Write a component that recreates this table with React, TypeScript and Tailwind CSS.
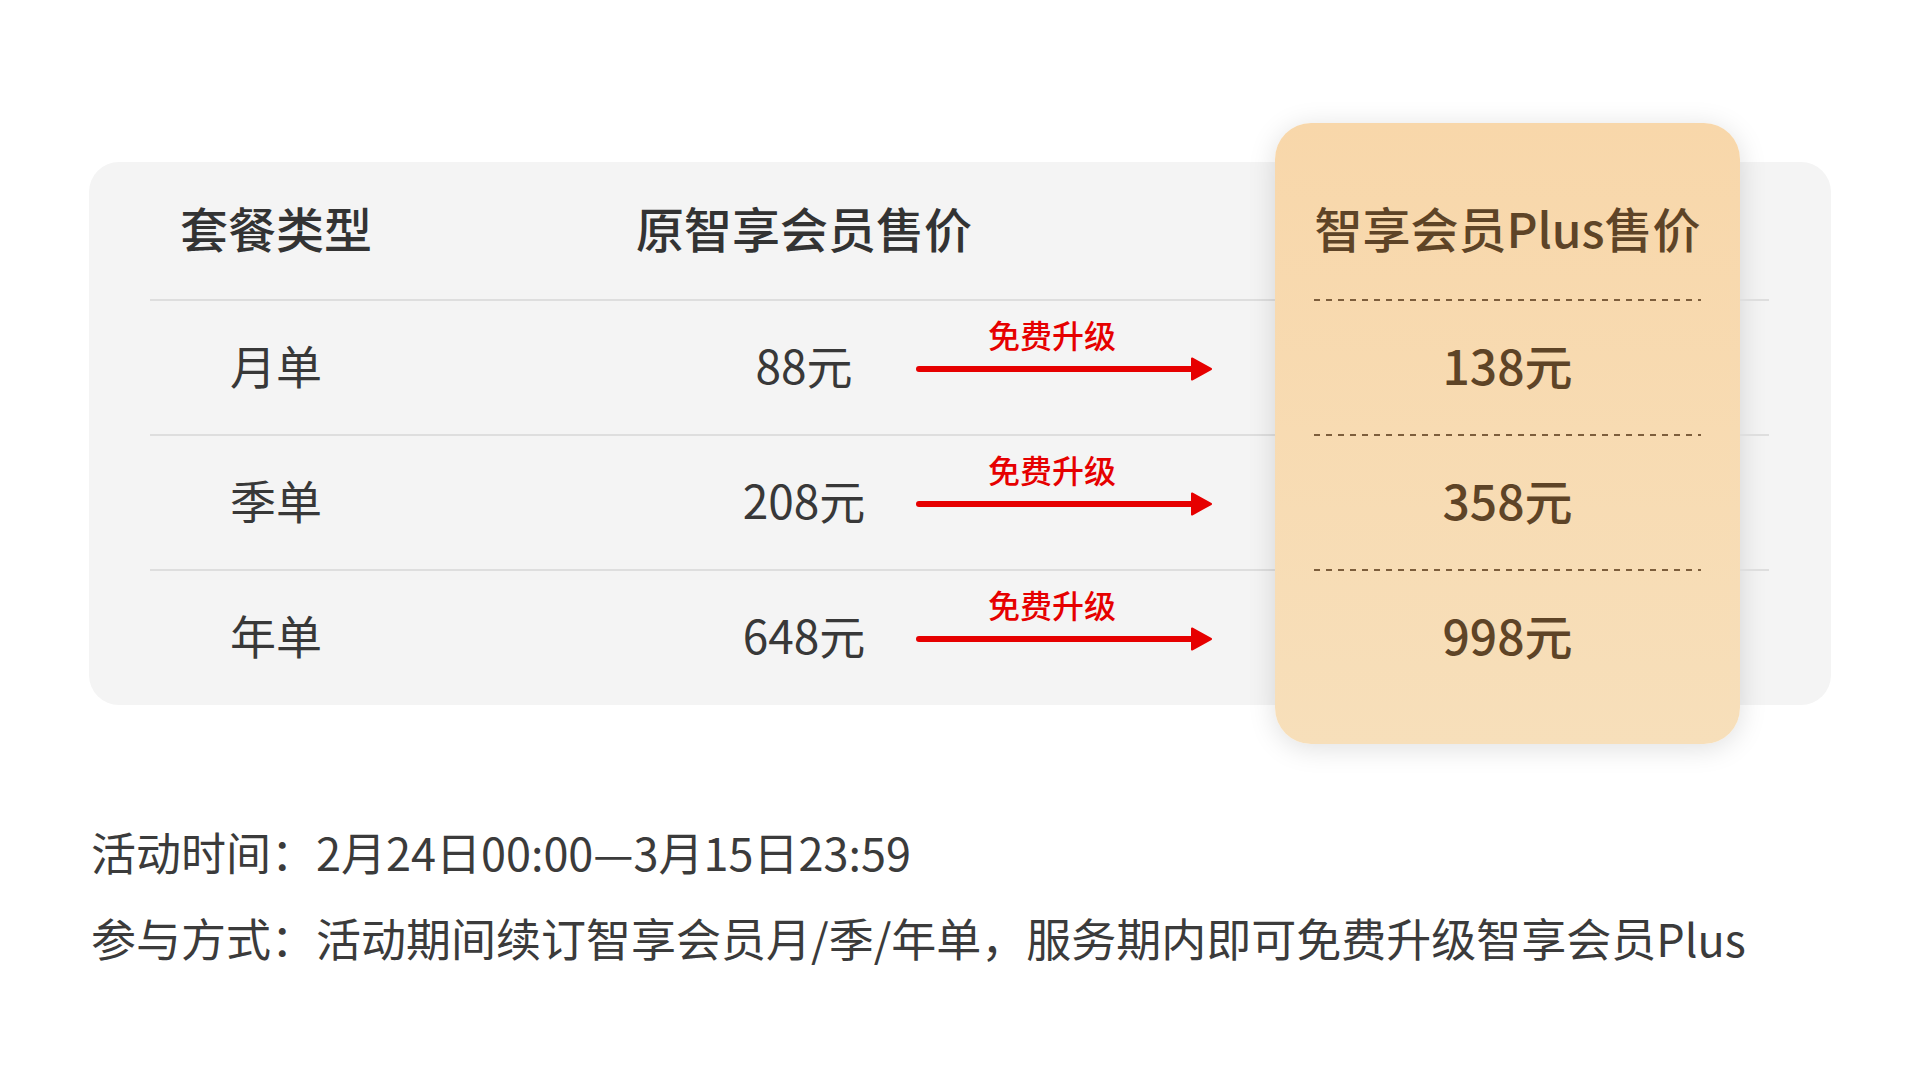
const rows = [
  { name: '月单', price: '88元', plus: '138元' },
  { name: '季单', price: '208元', plus: '358元' },
  { name: '年单', price: '648元', plus: '998元' },
];

function UpgradeArrow() {
  return (
    <div className="self-start mt-[17px] ml-[12px] w-[296px] flex flex-col">
      <span className="ml-[72px] text-[32px] leading-none font-medium text-[#e60000] whitespace-nowrap">
        免费升级
      </span>
      <svg className="mt-[7px]" width="296" height="24" viewBox="0 0 296 24">
        <path d="M3 12 H282" stroke="#e60000" strokeWidth="6" strokeLinecap="round" />
        <polygon
          points="276,1.5 295,12 276,22.5"
          fill="#e60000"
          stroke="#e60000"
          strokeWidth="2"
          strokeLinejoin="round"
        />
      </svg>
    </div>
  );
}

function DashLine() {
  return (
    <div className="h-[2px] w-full bg-[repeating-linear-gradient(90deg,#7d5e3c_0px,#7d5e3c_6px,transparent_6px,transparent_12px)]" />
  );
}

export default function App() {
  return (
    <div className="w-[1920px] h-[1080px] bg-white pt-[162px] overflow-hidden font-['Noto_Sans_CJK_SC','Noto_Sans',sans-serif]">
      <div className="ml-[89px] w-[1742px] h-[543px] rounded-[30px] bg-[#f4f4f4] flex">
        {/* original price table */}
        <div className="w-[1186px] pl-[61px] flex flex-col">
          <div className="h-[137px] pb-[7px] flex items-center text-[48px] leading-none font-medium text-[#333333]">
            <div className="w-[252px] flex justify-center whitespace-nowrap">套餐类型</div>
            <div className="ml-[302px] w-[200px] flex justify-center whitespace-nowrap">原智享会员售价</div>
          </div>
          {rows.map((row) => (
            <div
              key={row.name}
              className="h-[135px] border-t-2 border-[#dedede] pb-[7px] flex items-center text-[46px] leading-none text-[#383838]"
            >
              <div className="w-[252px] flex justify-center whitespace-nowrap">{row.name}</div>
              <div className="ml-[302px] w-[200px] flex justify-center whitespace-nowrap">{row.price}</div>
              <UpgradeArrow />
            </div>
          ))}
        </div>

        {/* plus card */}
        <div className="w-[465px] -my-[39px] rounded-[36px] bg-gradient-to-b from-[#f8d7aa] to-[#f7dfba] shadow-[0_4px_28px_rgba(0,0,0,0.13)] px-[39px] pt-[39px] flex flex-col text-[#5e4427]">
          <div className="h-[137px] pb-[7px] flex items-center justify-center text-[48px] leading-none font-medium whitespace-nowrap">
            智享会员Plus售价
          </div>
          {rows.map((row) => (
            <div key={row.plus} className="h-[135px] flex flex-col">
              <DashLine />
              <div className="flex-1 pb-[7px] flex items-center justify-center text-[48px] leading-none font-medium">
                {row.plus}
              </div>
            </div>
          ))}
        </div>

        {/* row lines continuing past the card */}
        <div className="w-[90px] pr-[61px] flex flex-col">
          <div className="h-[137px]" />
          {rows.map((row) => (
            <div key={row.name} className="h-[135px] border-t-2 border-[#dedede]" />
          ))}
        </div>
      </div>

      <div className="ml-[91px] mt-[104px] text-[45px] leading-[86px] text-[#3b3b3b] whitespace-nowrap">
        <p>活动时间：2月24日00:00—3月15日23:59</p>
        <p>参与方式：活动期间续订智享会员月/季/年单，服务期内即可免费升级智享会员Plus</p>
      </div>
    </div>
  );
}
